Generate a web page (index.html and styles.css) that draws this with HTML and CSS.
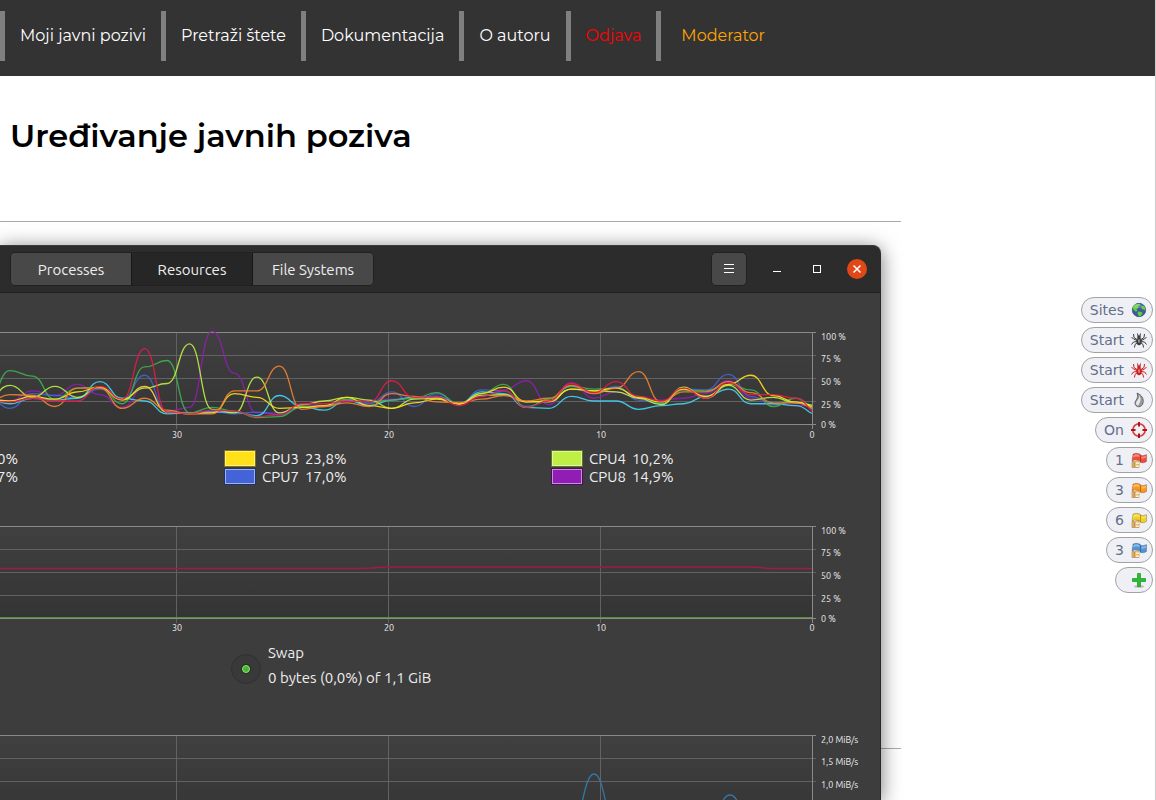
FILE: index.html
```html
<!DOCTYPE html>
<html lang="hr">
<head>
<meta charset="utf-8">
<meta name="viewport" content="width=device-width, initial-scale=1">
<title>Uređivanje javnih poziva</title>
<link rel="stylesheet" href="styles.css">
</head>
<body>
<header class="site-header">
  <nav class="nav">
    <a class="nav-link" href="#pozivi">Moji javni pozivi</a>
    <a class="nav-link" href="#stete">Pretraži štete</a>
    <a class="nav-link" href="#dokumentacija">Dokumentacija</a>
    <a class="nav-link" href="#autor">O autoru</a>
    <a class="nav-link nav-logout" href="#odjava">Odjava</a>
    <span class="nav-role">Moderator</span>
  </nav>
</header>

<main class="page">
  <h1 class="page-title">Uređivanje javnih poziva</h1>
  <section class="calls"></section>
</main>

<section class="window" aria-label="System Monitor">
  <div class="titlebar">
    <div class="tabs">
      <button class="tab" type="button">Processes</button>
      <button class="tab tab-active" type="button">Resources</button>
      <button class="tab" type="button">File Systems</button>
    </div>
    <div class="controls">
      <button class="menu-button" type="button" aria-label="Menu">
        <svg width="12" height="12" viewBox="0 0 12 12"><path d="M1 1.5h10M1 5.5h10M1 9.5h10" stroke="#fff"/></svg>
      </button>
      <button class="control" type="button" aria-label="Minimize">
        <svg width="20" height="20" viewBox="0 0 20 20"><path d="M6 12.5h8" stroke="#fff"/></svg>
      </button>
      <button class="control" type="button" aria-label="Maximize">
        <svg width="20" height="20" viewBox="0 0 20 20"><rect x="6.500" y="6.500" width="7" height="7" fill="none" stroke="#fff"/></svg>
      </button>
      <button class="control control-close" type="button" aria-label="Close">
        <svg width="20" height="20" viewBox="0 0 20 20"><path d="M6.500 6.500l7 7M13.500 6.500l-7 7" stroke="#fff" stroke-width="1.500"/></svg>
      </button>
    </div>
  </div>

  <div class="monitor">
    <svg class="chart" width="880" height="118" viewBox="0 0 880 118">
      <defs>
        <linearGradient id="shade" x1="0" y1="0" x2="0" y2="1">
          <stop offset="0" stop-color="#404040"/><stop offset="1" stop-color="#343434"/>
        </linearGradient>
        <clipPath id="plot"><rect x="0" y="0" width="812" height="99"/></clipPath>
        <g id="grid">
          <rect x="0" y="6" width="812" height="92" fill="url(#shade)"/>
          <path d="M0 29.500h816M0 52.500h816M0 75.500h816M176.500 7v96M388.500 7v96M600.500 7v96" fill="none" stroke="#626262"/>
          <path d="M0 6.500h816M0 98.500h816M812.500 6v97" fill="none" stroke="#8a8a8a"/>
        </g>
      </defs>
      <use href="#grid"/>
      <g id="cpu-lines" class="lines" clip-path="url(#plot)"></g>
      <g class="tick">
        <text x="821" y="14">100 %</text><text x="821" y="36">75 %</text><text x="821" y="59">50 %</text><text x="821" y="82">25 %</text><text x="821" y="102">0 %</text>
      </g>
      <g class="tick tick-time">
        <text x="177" y="112">30</text><text x="389" y="112">20</text><text x="601" y="112">10</text><text x="812" y="112">0</text>
      </g>
    </svg>

    <div class="legend">
      <span class="legend-cut">0%</span>
      <span class="legend-item"><i class="swatch swatch-yellow"></i><span>CPU3</span><span>23,8%</span></span>
      <span class="legend-item"><i class="swatch swatch-lime"></i><span>CPU4</span><span>10,2%</span></span>
      <span class="legend-cut">7%</span>
      <span class="legend-item"><i class="swatch swatch-blue"></i><span>CPU7</span><span>17,0%</span></span>
      <span class="legend-item"><i class="swatch swatch-purple"></i><span>CPU8</span><span>14,9%</span></span>
    </div>

    <svg class="chart" width="880" height="118" viewBox="0 0 880 118">
      <use href="#grid"/>
      <path d="M0 48.500H360C375 48.500 375 47 390 47H752C762 47 762 48.500 772 48.500H812" fill="none" stroke="#9c1c4c" stroke-width="1.300"/>
      <path d="M0 97.500H812" stroke="#55903f"/>
      <g class="tick">
        <text x="821" y="14">100 %</text><text x="821" y="36">75 %</text><text x="821" y="59">50 %</text><text x="821" y="82">25 %</text><text x="821" y="102">0 %</text>
      </g>
      <g class="tick tick-time">
        <text x="177" y="111">30</text><text x="389" y="111">20</text><text x="601" y="111">10</text><text x="812" y="111">0</text>
      </g>
    </svg>

    <div class="swap">
      <svg width="30" height="30" viewBox="0 0 30 30">
        <circle cx="15" cy="15" r="14.500" fill="#393939" stroke="#313131"/>
        <circle cx="15" cy="15" r="5" fill="#1d3514"/>
        <circle cx="15" cy="15" r="3.500" fill="#4cb03a" stroke="#99e383"/>
      </svg>
      <div class="swap-text"><span>Swap</span><span>0 bytes (0,0%) of 1,1 GiB</span></div>
    </div>

    <svg class="chart" width="880" height="118" viewBox="0 0 880 118">
      <use href="#grid"/>
      <path d="M571 98C582 98 583 45 594 45S606 98 616 98M707 98C718 98 719 66 730 66S742 98 752 98" fill="none" stroke="#3079aa" stroke-width="1.300"/>
      <g class="tick">
        <text x="821" y="14">2,0 MiB/s</text><text x="821" y="36">1,5 MiB/s</text><text x="821" y="59">1,0 MiB/s</text>
      </g>
    </svg>
  </div>
</section>

<aside class="hud" aria-label="Tools">
  <svg class="defs" width="0" height="0" aria-hidden="true">
    <defs>
      <g id="spider">
        <g fill="none" stroke="currentColor" stroke-width="1">
          <path d="M6 7.500L3 5.500L2.500 2M6 8.500L2.500 7L.5 5M6 9.500L2.500 10L.5 12.500M6.500 10.500L4 12.500L3.500 15.500"/>
          <path d="M10 7.500L13 5.500L13.500 2M10 8.500L13.500 7L15.500 5M10 9.500L13.500 10L15.500 12.500M9.500 10.500L12 12.500L12.500 15.500"/>
          <path d="M7 4L6.500 1.500M9 4L9.500 1.500"/>
        </g>
        <circle cx="8" cy="5" r="1.800" fill="currentColor"/>
        <ellipse cx="8" cy="9.500" rx="2.600" ry="3.700" fill="currentColor"/>
        <ellipse cx="8" cy="9" rx="1" ry="2" fill="#fff" opacity=".45"/>
      </g>
      <g id="flag">
        <path d="M2 2Q5 .5 9 2L10 3.500Q13 4 15.500 2.500V9.500Q13 11.500 9.500 10.500L8.500 8.500Q4.500 7 1 9Z" fill="currentColor" stroke="#000" stroke-opacity=".3" stroke-width=".7"/>
        <path d="M2.500 3Q5 1.500 8.500 3V5Q5 4 2 5.500ZM10.500 4.500Q13 5 15 3.500V5.500Q13 7 10.500 6.500Z" fill="#fff" opacity=".35"/>
        <path d="M9.500 3v7" stroke="#000" opacity=".25"/>
        <path d="M1 9.500L3 9V15.500H1ZM3.500 10Q5 7.500 8 8.500V15.500H3.500Z" fill="#e8bd78" stroke="#ad783b" stroke-width=".6"/>
        <path d="M5 10.500h3v1.500H5zM5 13.500h3v1.500H5z" fill="#fff1cc"/>
      </g>
    </defs>
  </svg>
  <button class="pill" type="button">Sites
    <svg width="16" height="16" viewBox="0 0 16 16"><circle cx="8" cy="8" r="6.700" fill="#40599c" stroke="#294675" stroke-width=".7"/><path d="M2 5Q4 1.500 8.500 1.800L9.500 3L7 4.500L7.500 6L5.500 7L6.500 9L4.500 9.500L2 7ZM10.500 4L13 3.800Q14.500 6 14.500 8.500L12.500 7.500L10.500 7ZM7 9.500L10.500 10L11.500 11.500L9.500 14.200H8L6.500 11.500Z" fill="#5cd33c"/><ellipse cx="7" cy="4" rx="4.500" ry="2" fill="#fff" opacity=".2"/></svg>
  </button>
  <button class="pill" type="button">Start
    <svg class="ink-dark" width="16" height="16" viewBox="0 0 16 16"><use href="#spider"/></svg>
  </button>
  <button class="pill" type="button">Start
    <svg class="ink-crimson" width="16" height="16" viewBox="0 0 16 16"><use href="#spider"/></svg>
  </button>
  <button class="pill" type="button">Start
    <svg width="16" height="16" viewBox="0 0 16 16"><path d="M6 1C11 3 13 7 12 11C11 16 4 16 4 11C4 8 8 7 6 1Z" fill="#9a9a9a" stroke="#555" stroke-width=".8"/><path d="M8 3C9 7 6 8 5 11C5 14 8 14 8 12C10 9 10 6 8 3Z" fill="#e9e9e9"/></svg>
  </button>
  <button class="pill" type="button">On
    <svg width="16" height="16" viewBox="0 0 16 16" fill="none"><circle cx="8" cy="8" r="6.200" stroke="#df3939" stroke-width="1.600"/><path d="M8 0v4.500M8 11.500v4.500M0 8h4.500M11.500 8h4.500" stroke="#a91616" stroke-width="2"/></svg>
  </button>
  <button class="pill" type="button">1
    <svg class="ink-red" width="16" height="16" viewBox="0 0 16 16"><use href="#flag"/></svg>
  </button>
  <button class="pill" type="button">3
    <svg class="ink-orange" width="16" height="16" viewBox="0 0 16 16"><use href="#flag"/></svg>
  </button>
  <button class="pill" type="button">6
    <svg class="ink-yellow" width="16" height="16" viewBox="0 0 16 16"><use href="#flag"/></svg>
  </button>
  <button class="pill" type="button">3
    <svg class="ink-blue" width="16" height="16" viewBox="0 0 16 16"><use href="#flag"/></svg>
  </button>
  <button class="pill pill-add" type="button" aria-label="Add">
    <svg width="16" height="16" viewBox="0 0 16 16"><ellipse cx="8" cy="14.500" rx="5" ry="1.300" fill="#bbb"/><path d="M6.500 1.500h3v5h5v3h-5v5h-3v-5h-5v-3h5z" fill="#2dbb32" stroke="#159322" stroke-width=".7"/></svg>
  </button>
</aside>
<script src="charts.js"></script>
</body>
</html>
```
FILE: styles.css
```css
* { box-sizing: border-box; }

body {
  margin: 0;
  position: relative;
  min-height: 100vh;
  overflow: hidden;
  background: #fff;
  border-right: 1px solid #ccc;
  font-family: Montserrat, Inter, sans-serif;
}

button {
  margin: 0;
  padding: 0;
  border: 0;
  background: none;
  font: inherit;
  color: inherit;
}

svg { display: block; flex: none; }

.site-header {
  padding: 11px 0 15px;
  background: #333;
}

.nav {
  display: flex;
  height: 50px;
  font-size: 16px;
  font-weight: 400;
  line-height: 50px;
  white-space: nowrap;
}

.nav-link {
  padding: 0 15px;
  border-left: 5px solid #808080;
  color: #fff;
  text-decoration: none;
}

.nav-logout { color: #f00; }

.nav-role {
  padding-left: 20px;
  border-left: 5px solid #808080;
  color: #ffa500;
}

.page-title {
  margin: 0;
  padding: 39px 10px 64px;
  font-size: 32px;
  font-weight: 600;
  line-height: 42px;
}

.calls {
  width: 78%;
  height: 528px;
  border-top: 1px solid #aaa;
  border-bottom: 1px solid #aaa;
}

/* System monitor window */
.window {
  position: absolute;
  top: 245px;
  bottom: 0;
  left: 0;
  width: 881px;
  display: flex;
  flex-direction: column;
  border-top-right-radius: 8px;
  box-shadow: 0 3px 20px rgba(0, 0, 0, 0.55);
  font-family: Ubuntu, "Noto Sans", sans-serif;
  font-size: 15px;
  color: #eee;
}

.titlebar {
  display: flex;
  flex: none;
  justify-content: space-between;
  height: 48px;
  padding: 6px 14px 6px 10px;
  background: #2c2c2c;
  border-top: 1px solid #3b3b3b;
  border-bottom: 1px solid #202020;
  border-top-right-radius: 8px;
}

.tabs {
  display: flex;
  height: 34px;
  border: 1px solid #212121;
  border-radius: 5px;
  overflow: hidden;
}

.tab {
  width: 120px;
  background: #484848;
}

.tab-active {
  width: 122px;
  background: #262626;
  border-right: 1px solid #171717;
  border-left: 1px solid #171717;
}

.controls {
  display: flex;
  align-items: center;
  gap: 20px;
  height: 34px;
}

.menu-button {
  display: grid;
  place-items: center;
  width: 36px;
  height: 34px;
  border: 1px solid #212121;
  border-radius: 5px;
  background: #484848;
}

.control {
  width: 20px;
  height: 20px;
  border-radius: 50%;
}

.control-close { background: #e14817; }

.monitor {
  flex: 1;
  min-height: 0;
  padding-top: 33px;
  overflow: hidden;
  background: #3d3d3d;
  border-right: 1px solid #292929;
}

.lines path {
  fill: none;
  stroke-width: 1.3px;
  opacity: 0.9;
}

.tick {
  fill: #eee;
  font-size: 9px;
}

.tick-time { text-anchor: middle; }

.legend {
  display: grid;
  grid-template-columns: 224px 327px 1fr;
  height: 76px;
  padding-top: 6px;
  align-content: start;
  line-height: 18px;
}

.legend-cut {
  display: flex;
  justify-content: flex-end;
  width: 18px;
}

.legend-item {
  display: flex;
  align-items: flex-start;
  gap: 6px;
}

.swatch {
  width: 32px;
  height: 17px;
  border: 1px solid;
}

.swatch-yellow { background: #ffe119; border-color: #80700c; box-shadow: inset 0 0 0 1px #fff08c; }
.swatch-lime { background: #bfef45; border-color: #5f7722; box-shadow: inset 0 0 0 1px #dff7a2; }
.swatch-blue { background: #4363d8; border-color: #21316c; box-shadow: inset 0 0 0 1px #a1b1eb; }
.swatch-purple { background: #911eb4; border-color: #480f5a; box-shadow: inset 0 0 0 1px #c88ed9; }

.swap {
  display: flex;
  align-items: center;
  gap: 7px;
  height: 91px;
  padding: 0 0 30px 231px;
}

.swap-text {
  display: flex;
  flex-direction: column;
  padding-bottom: 8px;
  line-height: 25px;
}

/* Tool pills on the right edge */
.hud {
  position: absolute;
  top: 297px;
  right: 2px;
  display: flex;
  flex-direction: column;
  align-items: flex-end;
  gap: 4px;
  font-family: "DejaVu Sans", sans-serif;
  font-size: 14px;
  color: #626e8a;
}

.defs { position: absolute; }

.pill {
  display: flex;
  align-items: center;
  gap: 7px;
  height: 26px;
  padding: 0 5px 0 8px;
  border: 1px solid #a2a2a2;
  border-radius: 13px;
  background: #eff0f5;
}

.pill-add { padding-left: 15px; }

.ink-dark { color: #3d3d3d; }
.ink-crimson { color: #c92020; }
.ink-red { color: #f24a36; }
.ink-orange { color: #ff9417; }
.ink-yellow { color: #f2cf22; }
.ink-blue { color: #4d94db; }
```
FILE: charts.js
```javascript
// CPU load in percent, oldest sample first; later entries are drawn on top.
const cpus = [
  ["#911eb4", [25,25,36,31,43,32,18,40,14,18,101,55,12,12,21,20,25,25,27,29,29,22,30,37,47,21,45,28,35,28,26,28,33,47,28,22,20,20]],
  ["#4363d8", [30,17,33,31,28,38,27,53,13,12,14,11,13,10,18,20,26,22,35,19,33,22,37,36,19,25,41,33,41,26,22,38,37,54,30,22,24,15]],
  ["#42d4f4", [27,22,28,26,28,46,28,25,11,12,13,13,9,31,19,15,26,20,26,29,30,22,35,33,18,17,30,25,25,16,20,22,30,38,22,22,20,10]],
  ["#3cb44b", [25,58,52,27,39,40,22,62,69,12,18,14,7,8,19,19,27,24,26,28,34,22,33,43,18,27,41,38,39,30,22,37,36,43,37,19,28,15]],
  ["#bfef45", [28,42,29,41,29,40,27,39,44,87,16,12,51,12,21,25,29,26,17,27,28,22,31,32,24,24,38,36,35,28,21,40,28,42,26,29,23,20]],
  ["#ffe119", [27,25,30,27,35,40,26,41,13,11,12,33,29,17,18,20,29,20,17,23,27,22,33,40,24,25,38,36,39,29,24,38,30,43,53,31,24,18]],
  ["#f58231", [24,32,31,19,39,39,17,28,15,11,11,36,36,63,16,19,23,19,33,30,24,23,27,31,25,28,42,33,39,57,24,35,35,46,34,23,23,16]],
  ["#e6194b", [24,24,28,25,25,41,27,82,13,11,15,14,8,10,22,22,25,24,47,29,30,20,30,36,18,25,44,34,46,30,25,39,28,45,32,32,28,12]]
];

const STEP = 22.45;
const FIRST = -12.45;
const BASE = 98;
const SCALE = 0.92;
const group = document.getElementById("cpu-lines");

for (const [color, loads] of cpus) {
  const points = loads.map((load, i) => [FIRST + i * STEP, BASE - load * SCALE]);
  let d = `M${points[0].join(" ")}`;
  for (let i = 1; i < points.length; i++) {
    const [x0, y0] = points[i - 1];
    const [x1, y1] = points[i];
    const mid = (x0 + x1) / 2;
    d += `C${mid} ${y0} ${mid} ${y1} ${x1} ${y1}`;
  }
  const path = document.createElementNS("http://www.w3.org/2000/svg", "path");
  path.setAttribute("d", d);
  path.setAttribute("stroke", color);
  group.append(path);
}
```
